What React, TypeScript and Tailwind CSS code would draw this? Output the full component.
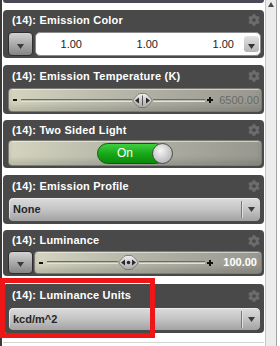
import { FaCog } from 'react-icons/fa';

const font = { fontFamily: '"Liberation Sans", Arial, sans-serif' };

function Header({ title, h }: { title: string; h: string }) {
  return (
    <div className={`flex items-center justify-between pl-[9px] pr-[4px] ${h}`}>
      <span className="text-[11px] font-bold text-white tracking-[0.2px] leading-none">{title}</span>
      <FaCog className="text-[#6c6c6c]" size={12} />
    </div>
  );
}

function DownTri({ color = '#3a3a3a' }: { color?: string }) {
  return (
    <svg width="7" height="5" viewBox="0 0 7 5">
      <path d="M0 0 L7 0 L3.5 5 Z" fill={color} />
    </svg>
  );
}

function Thumb({ dot }: { dot?: boolean }) {
  return (
    <svg width="21" height="15" viewBox="0 0 21 15" className="shrink-0">
      <defs>
        <linearGradient id={dot ? 'tg2' : 'tg1'} x1="0" y1="0" x2="0" y2="1">
          <stop offset="0" stopColor="#f0f0f0" />
          <stop offset="1" stopColor="#a8a8a8" />
        </linearGradient>
      </defs>
      <path
        d="M1 7.5 Q1 6.5 3 4.5 L6 1.5 Q7 0.5 9 0.5 L12 0.5 Q14 0.5 15 1.5 L18 4.5 Q20 6.5 20 7.5 Q20 8.5 18 10.5 L15 13.5 Q14 14.5 12 14.5 L9 14.5 Q7 14.5 6 13.5 L3 10.5 Q1 8.5 1 7.5 Z"
        fill={`url(#${dot ? 'tg2' : 'tg1'})`}
        stroke="#6a6a6a"
        strokeWidth="0.8"
      />
      <path d="M3 7.5 L7 4.5 L7 10.5 Z" fill="#2a2a2a" />
      <path d="M18 7.5 L14 4.5 L14 10.5 Z" fill="#2a2a2a" />
      {dot ? (
        <circle cx="10.5" cy="7.5" r="1.8" fill="#2a2a2a" />
      ) : (
        <rect x="10" y="2.5" width="1" height="10" fill="#555" />
      )}
    </svg>
  );
}

function Plus() {
  return (
    <svg width="6" height="6" viewBox="0 0 6 6" className="shrink-0">
      <rect x="0" y="2" width="6" height="2" fill="#111" />
      <rect x="2" y="0" width="2" height="6" fill="#111" />
    </svg>
  );
}

function Track() {
  return <div className="h-[3px] border-t border-[#6c6c64] bg-[#bcbcb0] border-b border-b-[#e2e2d6]" />;
}

const sliderBg =
  'bg-gradient-to-r from-[#d4d4bf] via-[#b2b2a6] to-[#97978f] shadow-[inset_0_-5px_5px_rgba(0,0,0,0.12),inset_0_1px_0_rgba(255,255,255,0.5)] border border-[#7c7c74] rounded-[4px]';

function LeftButton({ h }: { h: string }) {
  return (
    <div
      className={`w-[25px] ${h} shrink-0 rounded-[4px] border border-[#2e2e2e] bg-gradient-to-b from-[#d2d2d2] to-[#858585] flex justify-center items-end pb-[6px]`}
    >
      <DownTri color="#3a3a3a" />
    </div>
  );
}

function Dropdown({ label, h }: { label: string; h: string }) {
  return (
    <div
      className={`${h} rounded-[5px] border border-[#4a4a4a] bg-gradient-to-b from-[#dcdcdc] via-[#c4c4c4] to-[#a2a2a2] shadow-[inset_1px_1px_0_rgba(255,255,255,0.5)] flex items-center`}
    >
      <span className="flex-1 pl-[4px] text-[11px] font-bold text-[#262626] leading-none">{label}</span>
      <div className="w-[1px] h-[17px] bg-[#7a7a7a] border-r border-[#e0e0e0] box-content" />
      <div className="w-[17px] flex justify-center">
        <DownTri color="#3c3c3c" />
      </div>
    </div>
  );
}

export default function App() {
  return (
    <div className="w-[280px] h-[346px] bg-white relative overflow-hidden flex" style={font}>
      <div className="w-[2px] h-full bg-[#3a3a3a]" />

      {/* Panels */}
      <div className="ml-[1px] w-[261px] flex flex-col">
        <div className="h-[3px] bg-[#4c4757] rounded-b-[3px]" />

        {/* Emission Color */}
        <div className="mt-[7px] bg-[#494949] rounded-[4px]">
          <Header title="(14): Emission Color" h="h-[20px]" />
          <div className="flex gap-[2px] pl-[5px] pr-[3px] pt-[2px] pb-[2px]">
            <LeftButton h="h-[24px]" />
            <div className="flex-1 h-[24px] bg-white border border-[#8a8a8a] rounded-[5px] flex items-center text-[11px] text-[#222] leading-none">
              <span className="w-[46px] text-right">1.00</span>
              <span className="w-[76px] text-right">1.00</span>
              <span className="w-[76px] text-right">1.00</span>
              <div className="flex-1" />
              <div className="w-[15px] h-[16px] mr-[1px] rounded-[3px] bg-gradient-to-b from-[#e2e2e2] to-[#b4b4b4] flex justify-center items-end pb-[3px]">
                <DownTri color="#333" />
              </div>
            </div>
          </div>
        </div>

        {/* Emission Temperature */}
        <div className="mt-[7px] bg-[#494949] rounded-[4px]">
          <Header title="(14): Emission Temperature (K)" h="h-[22px]" />
          <div className="pl-[5px] pr-[2px] pt-[1px] pb-[2px]">
            <div className={`h-[24px] flex items-center pl-[4px] pr-[2px] ${sliderBg}`}>
              <div className="w-[4px] h-[2px] bg-[#111] shrink-0" />
              <div className="ml-[4px] w-[111px]">
                <Track />
              </div>
              <Thumb />
              <div className="flex-1">
                <Track />
              </div>
              <div className="ml-[2px]">
                <Plus />
              </div>
              <span className="ml-[6px] text-[11px] text-[#6a6a66] leading-none">6500.00</span>
            </div>
          </div>
        </div>

        {/* Two Sided Light */}
        <div className="mt-[6px] bg-[#494949] rounded-[4px]">
          <Header title="(14): Two Sided Light" h="h-[20px]" />
          <div className="pl-[5px] pr-[2px] pb-[2px]">
            <div className={`h-[26px] flex items-center pl-[88px] ${sliderBg}`}>
              <div className="w-[69px] h-[21px] rounded-full border border-[#0b5a0b] bg-gradient-to-b from-[#3fcf3f] via-[#17a917] to-[#0c8a0c] flex items-center pl-[12px]">
                <span className="w-[30px] text-center text-[12px] text-white leading-none">On</span>
              </div>
              <div className="-ml-[14px] w-[21px] h-[21px] rounded-full border border-[#4a4a4a] bg-[radial-gradient(circle_at_40%_35%,#f6f6f6,#bcbcbc_70%,#9a9a9a)]" />
            </div>
          </div>
        </div>

        {/* Emission Profile */}
        <div className="mt-[7px] bg-[#494949] rounded-[4px]">
          <Header title="(14): Emission Profile" h="h-[22px]" />
          <div className="pl-[5px] pr-[3px] pb-[2px]">
            <Dropdown label="None" h="h-[25px]" />
          </div>
        </div>

        {/* Luminance */}
        <div className="mt-[6px] bg-[#494949] rounded-[4px]">
          <Header title="(14): Luminance" h="h-[21px]" />
          <div className="flex gap-[1px] pl-[5px] pr-[2px] pb-[2px]">
            <LeftButton h="h-[23px]" />
            <div className={`flex-1 h-[23px] flex items-center pl-[4px] pr-[4px] ${sliderBg}`}>
              <div className="w-[4px] h-[2px] bg-[#111] shrink-0" />
              <div className="ml-[4px] w-[71px]">
                <Track />
              </div>
              <Thumb dot />
              <div className="flex-1">
                <Track />
              </div>
              <div className="ml-[2px]">
                <Plus />
              </div>
              <span className="ml-[10px] text-[11px] font-bold text-white leading-none">100.00</span>
            </div>
          </div>
        </div>

        {/* Luminance Units */}
        <div className="mt-[8px] bg-[#494949] rounded-[4px]">
          <Header title="(14): Luminance Units" h="h-[23px]" />
          <div className="pl-[5px] pr-[3px] pb-[2px]">
            <Dropdown label="kcd/m^2" h="h-[24px]" />
          </div>
        </div>

        <div className="mt-[9px] h-[1px] bg-[#d2d2d2]" />
      </div>

      {/* Scrollbar */}
      <div className="ml-[1px] w-[12px] h-full border-l border-[#c6c6c6] border-r border-r-[#a4a4a4] bg-[#ececec] flex justify-center pt-[2px]">
        <svg width="6" height="5" viewBox="0 0 6 5">
          <path d="M0 5 L6 5 L3 0 Z" fill="#4a4a4a" />
        </svg>
      </div>

      {/* Highlight annotation */}
      <div className="absolute left-0 top-[278px] w-[155px] h-[60px] border-[5px] border-[#ee1616]" />
    </div>
  );
}
